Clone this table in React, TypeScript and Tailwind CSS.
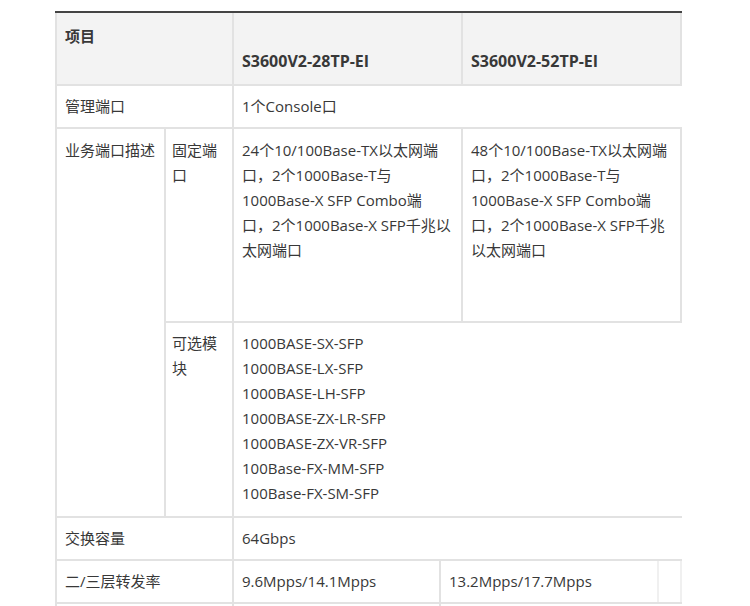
import React from "react";

const B = "border-[#e2e2e2]";

export default function App() {
  const font = { fontFamily: '"Open Sans", "Noto Sans CJK SC", sans-serif' };
  return (
    <div
      className="w-[750px] h-[606px] overflow-hidden bg-white pl-[55px] pt-[11px] text-[15px] leading-[25px] text-[#383838]"
      style={font}
    >
      <div className="w-[627px]">
        {/* header */}
        <div className="flex h-[75px] bg-[#f3f3f3] border-t-2 border-t-[#444]">
          <div className={`w-[177px] border-l-2 border-b-2 ${B} pl-[8px] pt-[11px] font-bold`}>项目</div>
          <div className={`w-[229px] border-l-2 border-b-2 ${B} pl-[8px] flex items-end pb-[10px] font-bold text-[16px]`}>S3600V2-28TP-EI</div>
          <div className={`w-[221px] border-l-2 border-r-2 border-b-2 ${B} pl-[8px] flex items-end pb-[10px] font-bold text-[16px]`}>S3600V2-52TP-EI</div>
        </div>
        {/* 管理端口 */}
        <div className={`flex h-[43px] border-b-2 ${B}`}>
          <div className={`w-[177px] border-l-2 ${B} pl-[8px] flex items-center`}>管理端口</div>
          <div className={`flex-1 border-l-2 ${B} pl-[8px] flex items-center`}>1个Console口</div>
        </div>
        {/* 业务端口描述 */}
        <div className="flex">
          <div className={`w-[109px] border-l-2 border-b-2 ${B} pl-[8px] pt-[9px]`}>业务端口描述</div>
          <div className="flex-1 flex flex-col">
            <div className={`flex h-[194px] border-b-2 ${B}`}>
              <div className={`w-[68px] border-l-2 ${B} pl-[6px] pt-[9px]`}>固定端<br />口</div>
              <div className={`w-[229px] border-l-2 ${B} pl-[8px] pt-[9px] whitespace-nowrap`}>
                24个10/100Base-TX以太网端<br />
                口，2个1000Base-T与<br />
                1000Base-X SFP Combo端<br />
                口，2个1000Base-X SFP千兆以<br />
                太网端口
              </div>
              <div className={`w-[221px] border-l-2 border-r-2 ${B} pl-[8px] pt-[9px] whitespace-nowrap`}>
                48个10/100Base-TX以太网端<br />
                口，2个1000Base-T与<br />
                1000Base-X SFP Combo端<br />
                口，2个1000Base-X SFP千兆<br />
                以太网端口
              </div>
            </div>
            <div className={`flex h-[195px] border-b-2 ${B}`}>
              <div className={`w-[68px] border-l-2 ${B} pl-[6px] pt-[8px]`}>可选模<br />块</div>
              <div className={`flex-1 border-l-2 ${B} pl-[8px] pt-[8px]`}>
                <div>1000BASE-SX-SFP</div>
                <div>1000BASE-LX-SFP</div>
                <div>1000BASE-LH-SFP</div>
                <div>1000BASE-ZX-LR-SFP</div>
                <div>1000BASE-ZX-VR-SFP</div>
                <div>100Base-FX-MM-SFP</div>
                <div>100Base-FX-SM-SFP</div>
              </div>
            </div>
          </div>
        </div>
        {/* 交换容量 */}
        <div className={`flex h-[43px] border-b-2 ${B}`}>
          <div className={`w-[177px] border-l-2 ${B} pl-[8px] flex items-center`}>交换容量</div>
          <div className={`flex-1 border-l-2 ${B} pl-[8px] flex items-center`}>64Gbps</div>
        </div>
        {/* 二/三层转发率 */}
        <div className={`flex h-[43px] border-b-2 ${B}`}>
          <div className={`w-[177px] border-l-2 ${B} pl-[8px] flex items-center`}>二/三层转发率</div>
          <div className={`w-[207px] border-l-2 ${B} pl-[8px] flex items-center`}>9.6Mpps/14.1Mpps</div>
          <div className={`w-[218px] border-l-2 ${B} pl-[8px] flex items-center`}>13.2Mpps/17.7Mpps</div>
          <div className="w-[25px] border-l-2 border-r-2 border-l-[#f0f0f0] border-r-[#f0f0f0]"></div>
        </div>
        {/* next row (cut off) */}
        <div className="flex h-[43px]">
          <div className={`w-[177px] border-l-2 ${B}`}></div>
          <div className={`w-[207px] border-l-2 ${B}`}></div>
          <div className={`w-[218px] border-l-2 ${B}`}></div>
        </div>
      </div>
    </div>
  );
}
